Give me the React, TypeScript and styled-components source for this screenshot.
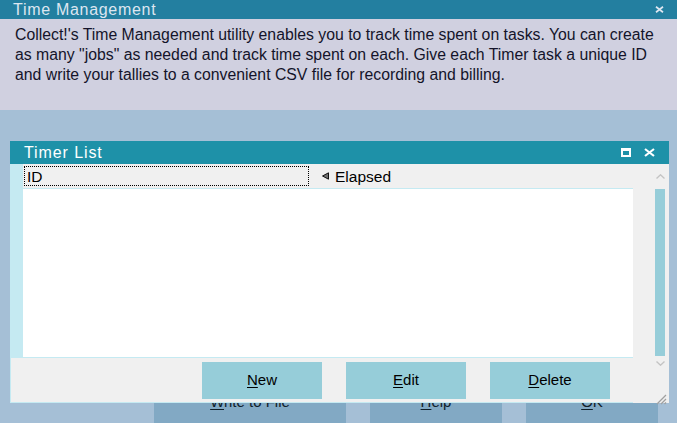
import React from "react";
import styled, { createGlobalStyle } from "styled-components";

const GlobalStyle = createGlobalStyle`
  html, body { margin: 0; padding: 0; }
  body { background: #a5bfd6; font-family: "Liberation Sans", Arial, sans-serif; }
`;

const Screen = styled.div`
  position: relative;
  width: 677px;
  height: 423px;
  overflow: hidden;
  background: #a5bfd6;
  display: flex;
  flex-direction: column;
`;

const TopBar = styled.div`
  height: 19px;
  background: #237fa0;
  color: #dde6f0;
  font-size: 16px;
  letter-spacing: 0.7px;
  display: flex;
  align-items: center;
  justify-content: space-between;
  padding: 0 13px 0 13px;
  box-sizing: border-box;
`;

const Description = styled.div`
  height: 91px;
  background: #d0d0e0;
  color: #14142a;
  font-size: 15.8px;
  line-height: 20px;
  padding: 6px 15px 0 15px;
  box-sizing: border-box;
  white-space: nowrap;
`;

const BackRow = styled.div`
  margin-top: auto;
  height: 40px;
  display: flex;
  gap: 24px;
  padding-left: 154px;
`;

const BackButton = styled.div<{ $w: number }>`
  width: ${(p) => p.$w}px;
  height: 40px;
  background: #82a9c4;
  color: #10202a;
  font-size: 15px;
  line-height: 38px;
  text-align: center;
`;

const U = styled.span`
  text-decoration: underline;
  text-underline-offset: 2px;
`;

const Dialog = styled.div`
  position: absolute;
  left: 10px;
  top: 141px;
  width: 659px;
  height: 262px;
  display: flex;
  flex-direction: column;
`;

const DialogTitle = styled.div`
  height: 23px;
  background: #1e91a8;
  color: #ffffff;
  font-size: 16px;
  letter-spacing: 0.9px;
  display: flex;
  align-items: center;
  justify-content: space-between;
  padding: 0 14px 0 14px;
  box-sizing: border-box;
`;

const TitleIcons = styled.div`
  display: flex;
  align-items: center;
  gap: 13px;
`;

const DialogBody = styled.div`
  flex: 1;
  display: grid;
  grid-template-columns: 1fr 36px;
  background: #f0f0f0;
  border-left: 1px solid #c5eaf2;
`;

const MainCol = styled.div`
  display: flex;
  flex-direction: column;
`;

const ListPane = styled.div`
  height: 193px;
  display: flex;
  border-bottom: 1px solid #c5eaf2;
`;

const Strip = styled.div`
  width: 12px;
  background: #c5eaf2;
`;

const ListArea = styled.div`
  flex: 1;
  display: flex;
  flex-direction: column;
`;

const Header = styled.div`
  height: 24px;
  background: #f0f0f0;
  border-bottom: 1px solid #c5eaf2;
  display: flex;
  align-items: center;
  font-size: 15.5px;
  color: #000;
`;

const IdCell = styled.div`
  margin-left: 1px;
  width: 285px;
  height: 20px;
  border: 1px dotted #000;
  box-sizing: border-box;
  padding-left: 2px;
  line-height: 19px;
`;

const ElapsedCell = styled.div`
  display: flex;
  align-items: center;
  gap: 6px;
  margin-left: 13px;
  line-height: 19px;
`;

const Rows = styled.div`
  flex: 1;
  background: #ffffff;
`;

const ButtonStrip = styled.div`
  flex: 1;
  display: flex;
  gap: 24px;
  padding: 4px 0 0 191px;
  border-bottom: 1px solid #c5eaf2;
`;

const Button = styled.div`
  width: 120px;
  height: 37px;
  background: #96cdd9;
  color: #000;
  font-size: 15px;
  line-height: 35px;
  text-align: center;
`;

const ScrollCol = styled.div`
  display: flex;
  flex-direction: column;
  align-items: flex-start;
  padding-left: 22px;
`;

const ChevronBox = styled.div<{ $h: number }>`
  height: ${(p) => p.$h}px;
  width: 10px;
  display: flex;
  align-items: center;
  justify-content: center;
`;

const Thumb = styled.div`
  width: 10px;
  height: 167px;
  background: #96cdd9;
`;

const Grip = styled.div`
  margin-top: auto;
  margin-left: 1px;
  margin-bottom: 1px;
  width: 11px;
  height: 11px;
`;

const MaxIcon = () => (
  <svg width="10" height="9" viewBox="0 0 10 9">
    <rect x="0" y="0" width="10" height="9" fill="#fff" />
    <rect x="2" y="3" width="6" height="4" fill="#1e91a8" />
  </svg>
);

const CloseIcon = ({ color, size }: { color: string; size: number }) => (
  <svg width={size} height={size - 2} viewBox="0 0 11 9">
    <path d="M1 1 L10 8 M10 1 L1 8" stroke={color} strokeWidth="2.2" />
  </svg>
);

const SortArrow = () => (
  <svg width="7" height="8" viewBox="0 0 7 8">
    <path d="M0.5 4 L6.5 0.8 L6.5 7.2 Z" fill="#707070" stroke="#101010" strokeWidth="1" />
  </svg>
);

const Chevron = ({ up }: { up: boolean }) => (
  <svg width="9" height="5" viewBox="0 0 9 5">
    <path d={up ? "M0.5 4.5 L4.5 0.8 L8.5 4.5" : "M0.5 0.5 L4.5 4.2 L8.5 0.5"} fill="none" stroke="#c4c4c4" strokeWidth="1.4" />
  </svg>
);

const GripIcon = () => (
  <svg width="11" height="11" viewBox="0 0 11 11">
    <path d="M10 1 L1 10 M10 5 L5 10 M10 8.5 L8.5 10" stroke="#a0a0a0" strokeWidth="1.3" />
  </svg>
);

export default function App() {
  return (
    <>
      <GlobalStyle />
      <Screen>
        <TopBar>
          <span>Time Management</span>
          <CloseIcon color="#dde6f0" size={9} />
        </TopBar>
        <Description>
          Collect!'s Time Management utility enables you to track time spent on tasks. You can create
          <br />
          as many "jobs" as needed and track time spent on each. Give each Timer task a unique ID
          <br />
          and write your tallies to a convenient CSV file for recording and billing.
        </Description>
        <BackRow>
          <BackButton $w={192}>
            <U>W</U>rite to File
          </BackButton>
          <BackButton $w={132}>
            <U>H</U>elp
          </BackButton>
          <BackButton $w={132}>
            <U>O</U>K
          </BackButton>
        </BackRow>
        <Dialog>
          <DialogTitle>
            <span>Timer List</span>
            <TitleIcons>
              <MaxIcon />
              <CloseIcon color="#ffffff" size={11} />
            </TitleIcons>
          </DialogTitle>
          <DialogBody>
            <MainCol>
              <ListPane>
                <Strip />
                <ListArea>
                  <Header>
                    <IdCell>ID</IdCell>
                    <ElapsedCell>
                      <SortArrow />
                      <span>Elapsed</span>
                    </ElapsedCell>
                  </Header>
                  <Rows />
                </ListArea>
              </ListPane>
              <ButtonStrip>
                <Button>
                  <U>N</U>ew
                </Button>
                <Button>
                  <U>E</U>dit
                </Button>
                <Button>
                  <U>D</U>elete
                </Button>
              </ButtonStrip>
            </MainCol>
            <ScrollCol>
              <ChevronBox $h={25}>
                <Chevron up />
              </ChevronBox>
              <Thumb />
              <ChevronBox $h={15}>
                <Chevron up={false} />
              </ChevronBox>
              <Grip>
                <GripIcon />
              </Grip>
            </ScrollCol>
          </DialogBody>
        </Dialog>
      </Screen>
    </>
  );
}
